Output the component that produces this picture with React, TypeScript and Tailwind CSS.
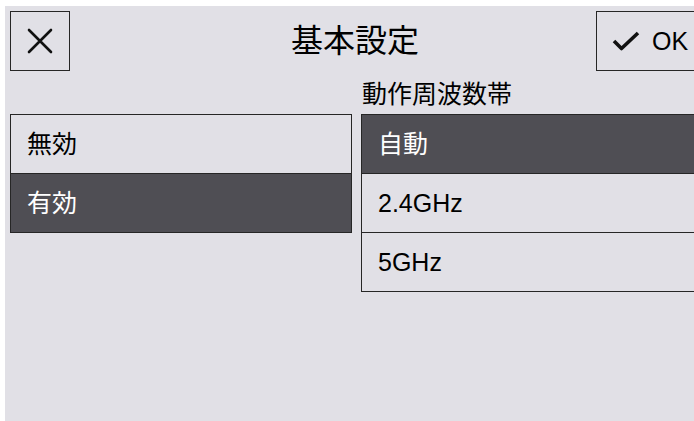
import React from 'react';

const font = { fontFamily: '"Liberation Sans", "Noto Sans CJK JP", sans-serif' };

function Row({ label, active }: { label: string; active?: boolean }) {
  return (
    <div
      className={`h-[60px] -mt-px first:mt-0 border border-[#262626] flex items-center pl-[16px] text-[25px] leading-none ${
        active ? 'bg-[#4f4e54] text-white' : 'bg-[#e1e0e6] text-black'
      }`}
    >
      {label}
    </div>
  );
}

export default function App() {
  const enableOptions = [
    { label: '無効', active: false },
    { label: '有効', active: true },
  ];
  const bandOptions = [
    { label: '自動', active: true },
    { label: '2.4GHz', active: false },
    { label: '5GHz', active: false },
  ];

  return (
    <div className="w-[694px] h-[421px] overflow-hidden bg-white" style={font}>
      <div className="ml-[5px] mt-[6px] w-[704px] h-[415px] bg-[#e1e0e6] p-[5px] flex flex-col">
        {/* header */}
        <div className="h-[60px] flex items-center">
          <div className="w-[108px]">
            <button className="w-[60px] h-[60px] border border-[#262626] flex items-center justify-center">
              <svg width="26" height="26" viewBox="0 0 26 26">
                <path d="M2 2 L24 24 M24 2 L2 24" stroke="#111" strokeWidth="2.6" strokeLinecap="round" />
              </svg>
            </button>
          </div>
          <div className="flex-1 text-center text-[32px] leading-none text-black pr-[4px]">基本設定</div>
          <button className="w-[108px] h-[60px] border border-[#262626] flex items-center justify-center gap-[12px]">
            <svg width="28" height="20" viewBox="0 0 28 20">
              <path d="M2 10 L9.5 17.5 L26 2" fill="none" stroke="#111" strokeWidth="3.6" strokeLinejoin="round" />
            </svg>
            <span className="text-[25px] leading-none text-black">OK</span>
          </button>
        </div>

        {/* body */}
        <div className="grid grid-cols-[342px_1fr] gap-x-[9px] -mt-px">
          <div className="h-[44px]" />
          <div className="h-[44px] pt-[12px] pl-[1px] text-[25px] leading-[25px] text-black">動作周波数帯</div>
          <div className="flex flex-col">
            {enableOptions.map((o) => (
              <Row key={o.label} label={o.label} active={o.active} />
            ))}
          </div>
          <div className="flex flex-col">
            {bandOptions.map((o) => (
              <Row key={o.label} label={o.label} active={o.active} />
            ))}
          </div>
        </div>
      </div>
    </div>
  );
}
